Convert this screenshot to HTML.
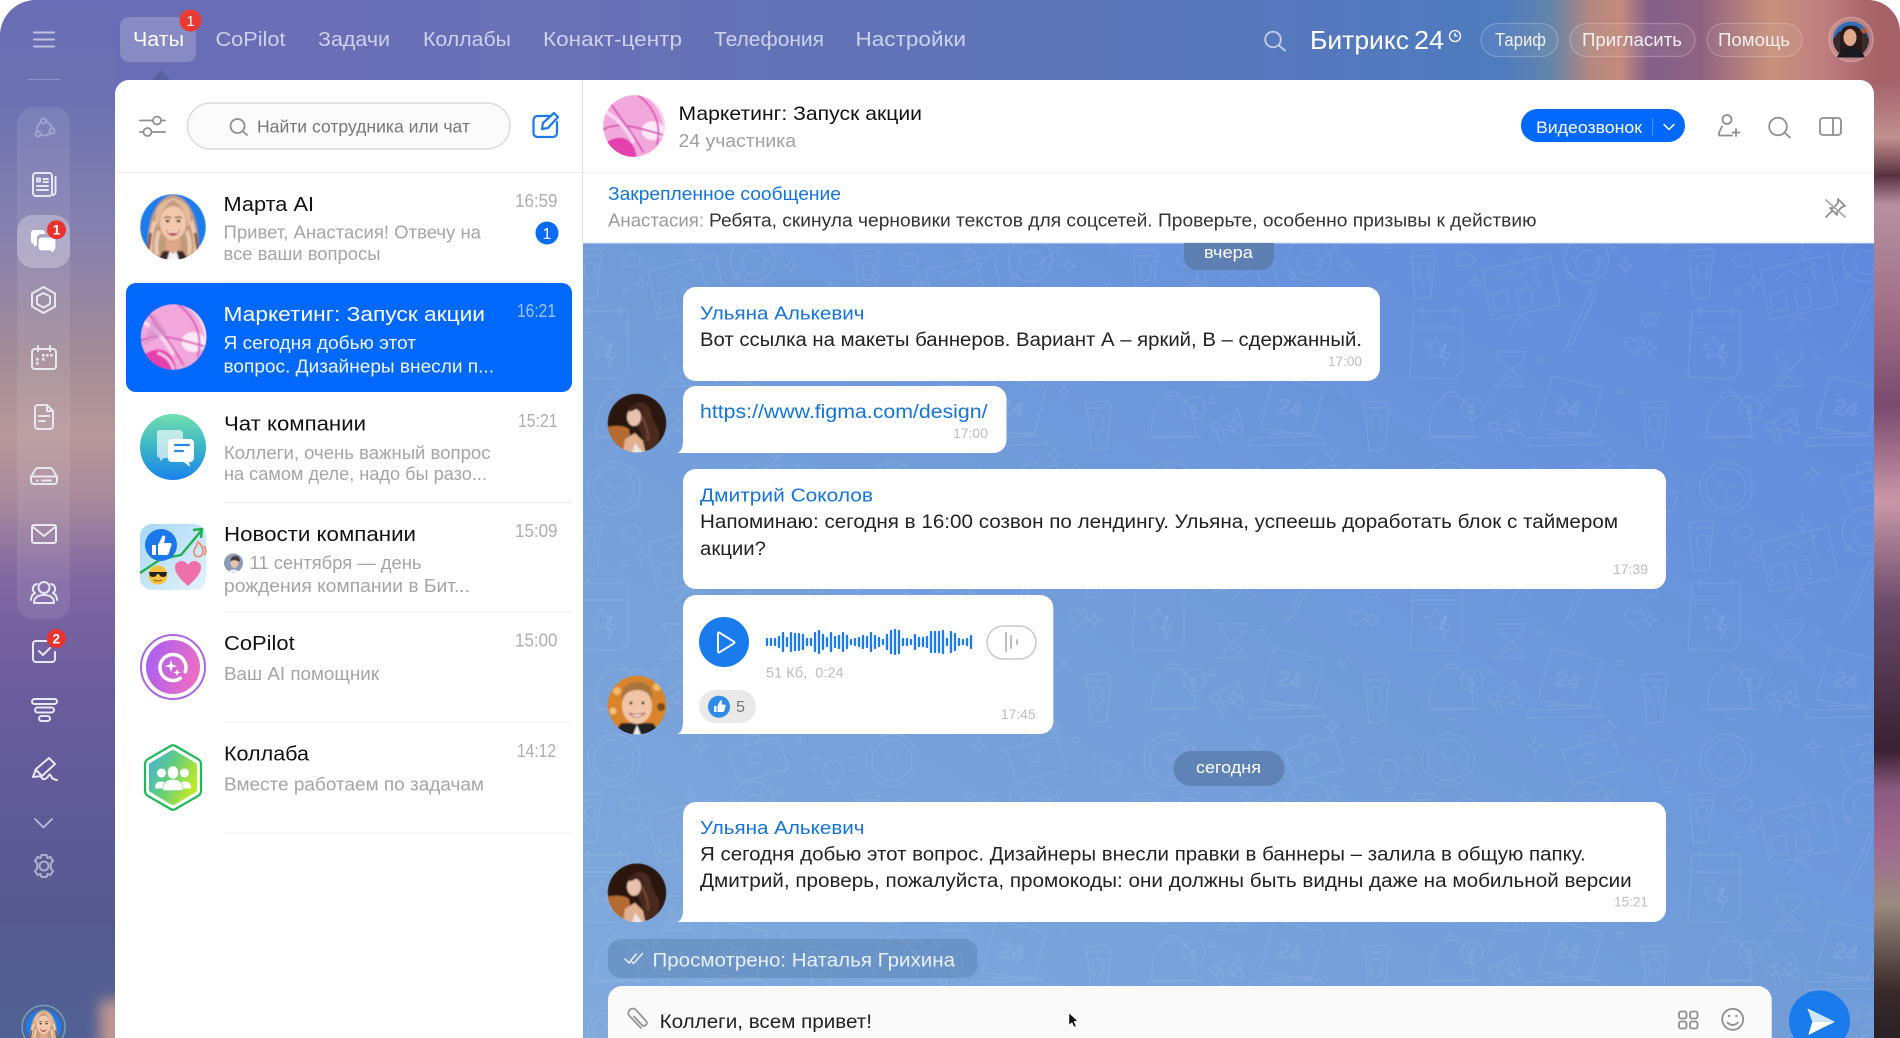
<!DOCTYPE html>
<html lang="ru"><head><meta charset="utf-8"><title>Битрикс24 — Чаты</title>
<style>
html,body{margin:0;padding:0;background:#fff;width:1900px;height:1038px;overflow:hidden}
svg{display:block}
text{font-family:"Liberation Sans","Noto Sans CJK SC",sans-serif;white-space:pre}
.nav{font-size:20px;fill:#cdd2ea}
.hb{font-size:18px;fill:#f4f0f0}
.n{font-size:20px;fill:#111}
.p{font-size:18px;fill:#a5a5a5}
.tm{font-size:18px;fill:#aeaeae}
.s{font-size:18px;fill:#fff}
.nm{font-size:18.5px;fill:#1573d6}
.m{font-size:19px;fill:#222}
.mt{font-size:14px;fill:#bdbdbd}
.ic{fill:none;stroke:#e6e8f2;stroke-width:2;stroke-linecap:round;stroke-linejoin:round}
.gi{fill:none;stroke:#8f8f8f;stroke-width:1.8;stroke-linecap:round;stroke-linejoin:round}
.d{fill:none;stroke:#fff;stroke-opacity:.085;stroke-width:1.2;stroke-linecap:round;stroke-linejoin:round}
</style></head><body>
<svg width="1900" height="1038" viewBox="0 0 1900 1038" xmlns="http://www.w3.org/2000/svg">
<defs>
<linearGradient id="lc" x1="0" y1="0" x2="0" y2="1">
<stop offset="0" stop-color="#6a6cb5"/><stop offset=".1" stop-color="#6c72b1"/><stop offset=".24" stop-color="#8a82ad"/><stop offset=".34" stop-color="#a28b96"/><stop offset=".42" stop-color="#b7989b"/><stop offset=".48" stop-color="#a88a9b"/><stop offset=".56" stop-color="#7f66a2"/><stop offset=".67" stop-color="#6a5c9d"/><stop offset=".78" stop-color="#5f5a98"/><stop offset=".88" stop-color="#565a90"/><stop offset="1" stop-color="#526193"/>
</linearGradient>
<linearGradient id="tb" gradientUnits="userSpaceOnUse" x1="0" y1="0" x2="1900" y2="0">
<stop offset="0" stop-color="#6a6cb5"/><stop offset=".3" stop-color="#6870b6"/><stop offset=".55" stop-color="#5d74b8"/><stop offset=".79" stop-color="#4f7bbf"/><stop offset=".816" stop-color="#6285aa"/><stop offset=".837" stop-color="#b5877f"/><stop offset=".853" stop-color="#c48a7c"/><stop offset=".868" stop-color="#84608a"/><stop offset=".895" stop-color="#8f6280"/><stop offset=".932" stop-color="#c8917a"/><stop offset=".958" stop-color="#bf8080"/><stop offset=".985" stop-color="#a86468"/><stop offset="1" stop-color="#a56068"/>
</linearGradient>
<linearGradient id="rs" x1="0" y1="0" x2="0" y2="1">
<stop offset="0" stop-color="#a5606a"/><stop offset=".06" stop-color="#c0918f"/><stop offset=".1" stop-color="#5a3040"/><stop offset=".13" stop-color="#b890a0"/><stop offset=".24" stop-color="#a07088"/><stop offset=".34" stop-color="#7a4a70"/><stop offset=".44" stop-color="#c898a8"/><stop offset=".55" stop-color="#6a4a6a"/><stop offset=".7" stop-color="#3a2030"/><stop offset=".74" stop-color="#8a5a80"/><stop offset=".8" stop-color="#a06a90"/><stop offset=".86" stop-color="#9a8a80"/><stop offset=".95" stop-color="#3a2a2a"/><stop offset="1" stop-color="#2a2025"/>
</linearGradient>
<linearGradient id="cb" x1="0" y1="1" x2="1" y2="0">
<stop offset="0" stop-color="#80aadc"/><stop offset=".5" stop-color="#719cd9"/><stop offset="1" stop-color="#5f88dd"/>
</linearGradient>
<linearGradient id="g1" x1="0" y1="0" x2="0" y2="1"><stop offset="0" stop-color="#72deae"/><stop offset=".5" stop-color="#3cb6c8"/><stop offset="1" stop-color="#1a82ee"/></linearGradient>
<linearGradient id="g2" x1="0" y1="0" x2="1" y2="1"><stop offset="0" stop-color="#a5d8f6"/><stop offset="1" stop-color="#e4f2fc"/></linearGradient>
<linearGradient id="g3" x1="0" y1="0" x2="1" y2=".3"><stop offset="0" stop-color="#a25ff6"/><stop offset="1" stop-color="#ea6cc6"/></linearGradient>
<linearGradient id="g4" x1="0" y1="0" x2="1" y2=".5"><stop offset="0" stop-color="#3db2dc"/><stop offset=".5" stop-color="#62cc82"/><stop offset="1" stop-color="#bce828"/></linearGradient>
<clipPath id="c33"><circle r="33"/></clipPath>
<clipPath id="c29"><circle r="29.5"/></clipPath>
<filter id="b4" x="-80%" y="-50%" width="260%" height="200%"><feGaussianBlur stdDeviation="7"/></filter>
<filter id="sf" x="-10%" y="-10%" width="120%" height="120%"><feGaussianBlur stdDeviation=".7"/></filter>

<g id="t" class="d">
 <circle cx="28" cy="30" r="26"/><circle cx="28" cy="30" r="20"/><path d="M20 22l8 9 9-4M28 44v1"/>
 <path d="M142 20l50-13 11 32-50 13zM160 15l-2-7 14-4 2 7M162 26l12-3 2 8-12 3z"/>
 <path d="M247 30a10 10 0 0 1 7 17l-1 6h-12l-1-6a10 10 0 0 1 7-17zM242 58h10M244 62h6M228 28h4M228 40h3M264 28h4M264 40h3"/>
 <path d="M270 70h24l-2 7-3 34-16 2-3-36zM268 70l3-6 20-1 4 6M276 86a6 9 0 1 0 12-1 6 9 0 1 0-12 1z"/>
 <path d="M62 84l68-15 10 50-68 15zM100 130l-10 14M102 130l12 10M72 108l15-3 3 18-15 3zM96 104l14-3 4 19-14 3zM120 99l-6-15M78 94l14-10 8 6 16-12M112 76l5 2-2 5"/>
 <path d="M182 58a22 22 0 1 0 .1 .1zM176 68a12 12 0 1 0 .1 .1zM174 79l20-16M190 60l8 2-3 6"/>
 <path d="M172 103l-22 50-4 8 7-4 24-51zM146 161l-4 5"/>
 <path d="M272 125l48 0 0 60-8 8-44-2zM280 120v10M312 120v10M268 142h52M294 150l3 8 8 1-6 5 2 8-7-4-7 4 2-8-6-5 8-1z"/>
 <path d="M76 166l30 0M78 166c0 12 10 14 12 18-2 4-12 8-12 16M104 166c0 12-10 14-12 18 2 4 12 8 12 16M74 200l32 0M82 196l8-6 8 6"/>
 <path d="M10 250c-2-12 2-38 20-40s22 20 24 40zM3 252l56-1M23 210c2-6 14-6 16 0M28 262l8-1"/><circle cx="52" cy="222" r="11"/>
 <path d="M132 190l50 12-12 48-52-8zM108 252l70-2 6 8-76 2zM128 248l42-1"/>
 <text x="135" y="230" font-size="22" class="d" transform="rotate(12 150 225)">24</text>
 <text x="49" y="227" font-size="11" class="d">1</text>
 <path d="M222 222h26l-2 7-3 34-16 2-3-36zM220 222l3-6 20-1 4 6M228 238a6 9 0 1 0 12-1 6 9 0 1 0-12 1z"/>
 <path d="M76 236l20-14 5 26-22-5zM76 236l-8 2 3 7 8-2M74 244l4 12 5-2-3-11"/>
 <path d="M115 8l2 6 6 2-6 2-2 6-2-6-6-2 6-2zM105 60l2 5 5 2-5 2-2 5-2-5-5-2 5-2zM205 73l2 5 5 2-5 2-2 5-2-5-5-2 5-2zM55 90l2 5 5 2-5 2-2 5-2-5-5-2 5-2zM230 155l2 5 5 2-5 2-2 5-2-5-5-2 5-2zM92 232l2 5 5 2-5 2-2 5-2-5-5-2 5-2zM190 262l2 5 5 2-5 2-2 5-2-5-5-2 5-2z"/>
 <circle cx="212" cy="10" r="3"/><circle cx="40" cy="105" r="3"/><circle cx="150" cy="90" r="3"/><circle cx="245" cy="100" r="3"/><circle cx="70" cy="215" r="3"/><circle cx="200" cy="205" r="3"/><circle cx="120" cy="175" r="3"/>
 <path d="M40 70c6-4 14-2 14 4s-8 8-14 6-6-8 0-10zM225 130c4-5 12-3 12 3 0 4-6 8-12 6-4-2-4-6 0-9zM205 155c3-4 8-4 10 0 2-4 8-4 9 1 0 5-6 8-10 12-4-4-10-8-9-13zM20 170l6-14-2 10 6 1-7 14 2-10z"/>
</g>
<pattern id="dood" patternUnits="userSpaceOnUse" x="1420" y="730" width="278" height="272">
 <use href="#t"/><use href="#t" x="-278"/><use href="#t" y="-272"/><use href="#t" x="-278" y="-272"/>
</pattern>

<g id="marta" clip-path="url(#c33)">
 <g filter="url(#sf)">
 <circle r="33" fill="#1b7bea"/>
 <path d="M-25 33C-27 18-26-28 0-32 26-28 27 18 25 33Z" fill="#c49a7c"/>
 <path d="M-21 32c-4-12 0-30 3-38M21 32c4-12 0-30-3-38M-16 28c-2-10 0-18 2-24M16 28c2-10 0-18-2-24" stroke="#ecc9b0" stroke-width="4" fill="none"/>
 <path d="M-26 26c3-8 2-14 4-20M26 26c-3-8-2-14-4-20" stroke="#8a5a40" stroke-width="3" fill="none"/>
 <path d="M-15 33l5-9 20 0 5 9Z" fill="#3a2c28"/><path d="M-6 33l3-10h6l3 10Z" fill="#f4f4f4"/>
 <path d="M-6 8h12l2 13-8 6-8-6Z" fill="#dfa78a"/>
 <ellipse cy="-4" rx="13" ry="17" fill="#f2c9ac"/>
 <path d="M0-27C-8-22-13-14-15 0-20-10-19-25 0-29 19-25 20-10 15 0 13-14 8-22 0-27Z" fill="#e2bb9c"/>
 <path d="M-9-9q3.500-2 7 0M2-9q3.500-2 7 0" stroke="#6a4430" stroke-width="1.200" fill="none"/>
 <ellipse cx="-5.500" cy="-6" rx="2" ry="1.300" fill="#3a2418"/><ellipse cx="5.500" cy="-6" rx="2" ry="1.300" fill="#3a2418"/>
 <path d="M-7 3q7 3 14 0-2 6-7 6t-7-6Z" fill="#c04a50"/><path d="M-5.500 3.800q5.500 2 11 0l-1 2h-9Z" fill="#fff"/>
 </g>
</g>
<g id="girl" clip-path="url(#c29)">
 <g filter="url(#sf)">
 <circle r="29.500" fill="#2a1510"/>
 <path d="M-30 4q14-3 22 2l4 26h-26Z" fill="#b56a30"/>
 <path d="M-14 30l2-14 10-6 8 8 3 14Z" fill="#e0b090"/>
 <path d="M-8-14c6-10 20-8 22 4 1 8 6 12 8 18 2 10-4 18-10 20-6-4-6-12-8-18-4-8-10-14-12-24Z" fill="#4a2a1f"/>
 <path d="M4-8c3 8 8 14 7 26" stroke="#6e4530" stroke-width="2.500" fill="none"/>
 <ellipse cx="-3" cy="-6" rx="7" ry="9" fill="#e9c2ae"/>
 <path d="M-10-12c2-7 12-9 16-3 0 5 1 8 1 11-2-5-5-9-8-10-3 2-6 3-9 2Z" fill="#40241a"/>
 <path d="M-5 30l3-10 8 10Z" fill="#f0e4e4"/>
 </g>
</g>
<g id="dima" clip-path="url(#c29)">
 <g filter="url(#sf)">
 <circle r="29.500" fill="#d9842c"/>
 <circle cx="-20" cy="-14" r="4" fill="#f0b96a"/><circle cx="20" cy="-18" r="4" fill="#f0b96a"/><circle cx="-24" cy="6" r="3.500" fill="#f3c27a"/><circle cx="24" cy="2" r="4" fill="#7a4a1f"/>
 <path d="M-24 30l8-12 32 0 8 12Z" fill="#232024"/><path d="M-4 30l4-10 4 10Z" fill="#eee"/>
 <ellipse cy="1" rx="15" ry="18" fill="#f1c4a6"/>
 <path d="M-15-4c-2-14 6-19 17-19 10 0 15 8 13 19-2-8-8-11-15-11-6 0-13 3-15 11Z" fill="#a9743c"/>
 <path d="M-8 8q8 8 16 0-8 3-16 0Z" fill="#fff" stroke="#b05a50" stroke-width="1"/>
 <circle cx="-6" cy="-2" r="1.500" fill="#333"/><circle cx="6" cy="-2" r="1.500" fill="#333"/>
 </g>
</g>
</defs>

<!-- frame background -->
<rect width="1900" height="1038" fill="#fff"/>
<path d="M36 0H1868a32 32 0 0 1 32 32V1038H0V36A36 36 0 0 1 36 0Z" fill="url(#tb)"/>
<path d="M0 36A36 36 0 0 1 36 0H115V1038H0Z" fill="url(#lc)"/>
<rect x="1874" y="80" width="26" height="958" fill="url(#rs)"/>
<rect x="100" y="1000" width="30" height="60" fill="#dca592" opacity=".8" filter="url(#b4)"/>

<!-- sidebar -->
<path d="M34 32.500h20M34 39.500h20M34 46.500h20" stroke="#d4d8ec" stroke-opacity=".8" stroke-width="2" stroke-linecap="round"/>
<path d="M28 79.500h32" stroke="#fff" stroke-opacity=".22"/>
<rect x="17" y="107" width="53" height="512" rx="16" fill="#fff" fill-opacity=".09"/>
<rect x="17" y="215" width="53" height="53" rx="16" fill="#fff" fill-opacity=".28"/>
<g class="ic" opacity=".35" stroke-width="1.800"><circle cx="43.500" cy="121" r="2.600"/><circle cx="38" cy="134" r="2.600"/><circle cx="52" cy="131" r="2.600"/><path d="M37 130a9 9 0 0 1 3-7M47 122a9 9 0 0 1 5 6M41 135a9 9 0 0 0 8-1" stroke-dasharray="3 2"/></g>
<g class="ic"><rect x="33" y="173" width="19" height="23" rx="3"/><path d="M55.500 177v15a3 3 0 0 1-3 3M37 178.500h3v3h-3zM43.500 179h4.500M43.500 182h4.500M37 186h11M37 190h11"/></g>
<path d="M34 230h8a3 3 0 0 1 3 3v1h-4a4 4 0 0 0-4 4v7l-3 2v-3a3 3 0 0 1-3-3v-8a3 3 0 0 1 3-3z" fill="#fff"/>
<path d="M41 237h12a3 3 0 0 1 3 3v8a3 3 0 0 1-2 2.800v3.200l-4-3H41a3 3 0 0 1-3-3v-8a3 3 0 0 1 3-3z" fill="#fff" stroke="#a09cbd"/>
<path class="ic" d="M43.500 287l11.500 6.500v13l-11.500 6.500-11.500-6.500v-13zM43.500 293l6.500 3.500v7.500l-6.500 3.500-6.500-3.500v-7.500z"/>
<g class="ic"><rect x="32" y="349" width="24" height="20" rx="3"/><path d="M38 346v5M50 346v5"/></g>
<g fill="#e6e8f2"><rect x="42" y="354" width="2.600" height="2.600"/><rect x="46" y="354" width="2.600" height="2.600"/><rect x="50" y="354" width="2.600" height="2.600"/><rect x="36" y="358" width="2.600" height="2.600"/><rect x="42" y="358" width="2.600" height="2.600"/><rect x="36" y="362" width="2.600" height="2.600"/></g>
<path class="ic" d="M35 408a3 3 0 0 1 3-3h9l6 6v15a3 3 0 0 1-3 3H38a3 3 0 0 1-3-3zM47 405v6h6M39 416h10M39 421h6"/>
<path class="ic" d="M31 477l4-7q1-2 4-2h10q3 0 4 2l4 7v4a3 3 0 0 1-3 3H34a3 3 0 0 1-3-3zM31 476.500h26M37 480.500h.5M42 480.500h9"/>
<path class="ic" d="M34 525h20a2 2 0 0 1 2 2v14a2 2 0 0 1-2 2H34a2 2 0 0 1-2-2v-14a2 2 0 0 1 2-2zM33 527l11 9 11-9"/>
<path class="ic" d="M44 582a5.500 5.500 0 1 1 0 11 5.500 5.500 0 0 1 0-11zM34 603q0-8 10-8t10 8zM37 584a5 5 0 0 0-2 9q-4 2-4 7M51 584a5 5 0 0 1 2 9q4 2 4 7"/>
<path class="ic" d="M36 641h13M55 652v7a3 3 0 0 1-3 3H36a3 3 0 0 1-3-3v-15a3 3 0 0 1 3-3M39 651l4 4 7-7"/>
<g class="ic"><rect x="32" y="699" width="25" height="5" rx="2.500"/><rect x="35" y="707.500" width="19" height="5" rx="2.500"/><rect x="39" y="716" width="11" height="5" rx="2.500"/></g>
<path class="ic" d="M33 777l3-8 13-11 6 6-13 12zM36 770l6 6M41 777c3 5 7 0 8-2s3 3 3 3 3 2 5 2"/>
<path d="M35 819l8.500 8.500 8.500-8.500" fill="none" stroke="#d7d9ea" stroke-opacity=".8" stroke-width="1.700" stroke-linecap="round" stroke-linejoin="round"/>
<g class="ic" opacity=".6" stroke-width="1.700"><circle cx="44" cy="866" r="4.500"/><path d="M41.500 855h5l1 3 3-1 2.500 4-2.200 2.200v5.600l2.200 2.200-2.500 4-3-1-1 3h-5l-1-3-3 1-2.500-4 2.200-2.200v-5.600l-2.200-2.200 2.500-4 3 1z"/></g>
<circle cx="56.500" cy="229.700" r="9.500" fill="#e8332f"/><text x="56.500" y="234.600" font-size="13.500" fill="#fff" text-anchor="middle" font-weight="bold">1</text>
<circle cx="56.300" cy="638.500" r="9.500" fill="#e8332f"/><text x="56.300" y="643.400" font-size="13.500" fill="#fff" text-anchor="middle" font-weight="bold">2</text>
<circle cx="43.600" cy="1027" r="21.500" fill="none" stroke="#6fb6c4" stroke-width="1.500" opacity=".8"/>
<g transform="translate(43.600 1027) scale(.54)"><use href="#marta"/></g>

<!-- top nav -->
<rect x="120" y="17" width="76" height="45" rx="9" fill="#fff" fill-opacity=".2"/>
<path d="M161 70l-9 10h18z" fill="#535d9c" fill-opacity=".7"/>
<text class="nav" x="133" y="46" style="fill:#fff" textLength="51" lengthAdjust="spacingAndGlyphs">Чаты</text>
<text class="nav" x="215.500" y="46" textLength="70" lengthAdjust="spacingAndGlyphs">CoPilot</text>
<text class="nav" x="318" y="46" textLength="72" lengthAdjust="spacingAndGlyphs">Задачи</text>
<text class="nav" x="423" y="46" textLength="88" lengthAdjust="spacingAndGlyphs">Коллабы</text>
<text class="nav" x="543" y="46" textLength="139" lengthAdjust="spacingAndGlyphs">Конакт-центр</text>
<text class="nav" x="714" y="46" textLength="110" lengthAdjust="spacingAndGlyphs">Телефония</text>
<text class="nav" x="855.500" y="46" textLength="110.500" lengthAdjust="spacingAndGlyphs">Настройки</text>
<circle cx="190.500" cy="20.500" r="11" fill="#ea3a33"/><text x="190.500" y="26" font-size="15" fill="#fff" text-anchor="middle">1</text>
<g fill="none" stroke="#c5cde6" stroke-width="1.900" stroke-linecap="round"><circle cx="1273" cy="39.500" r="7.800"/><path d="M1279 45.500l6 5"/></g>
<text x="1310" y="49" font-size="26" fill="#fff" textLength="99" lengthAdjust="spacingAndGlyphs">Битрикс</text>
<text x="1414" y="49" font-size="26" fill="#fff" textLength="30" lengthAdjust="spacingAndGlyphs">24</text>
<g fill="none" stroke="#fff" stroke-width="1.300"><circle cx="1455" cy="36" r="5.500"/><path d="M1455 33v3h2.500"/></g>
<g fill="#fff" fill-opacity=".05" stroke="#fff" stroke-opacity=".22" stroke-width="1.300">
<rect x="1481" y="23.500" width="77" height="33" rx="16.500"/><rect x="1570" y="23.500" width="125" height="33" rx="16.500"/><rect x="1707" y="23.500" width="95" height="33" rx="16.500"/></g>
<text class="hb" x="1495" y="46" textLength="51" lengthAdjust="spacingAndGlyphs">Тариф</text>
<text class="hb" x="1582" y="46" textLength="100" lengthAdjust="spacingAndGlyphs">Пригласить</text>
<text class="hb" x="1718" y="46" textLength="72" lengthAdjust="spacingAndGlyphs">Помощь</text>
<circle cx="1851" cy="39.500" r="22" fill="#fff" fill-opacity=".15" stroke="#e8b8b0" stroke-opacity=".5" stroke-width="1.500"/>
<g transform="translate(1851 39.500)"><circle r="18" fill="#2f6fb8"/><path d="M-18 0a18 18 0 0 0 36 0l-4-8h-26z" fill="#3a2a2c"/><path d="M-11 18V-2q0-12 11-12t11 12v20z" fill="#2a1b1a"/><ellipse cy="-2" cx="-1" rx="6.500" ry="8.500" fill="#e0a98c"/><path d="M-14 18q4-10 14-10t14 10z" fill="#181a20"/><circle cx="13" cy="-9" r="3" fill="#b05a3a"/></g>

<!-- main white panel -->
<path d="M129 80H1860a14 14 0 0 1 14 14V1038H115V94a14 14 0 0 1 14-14Z" fill="#fff"/>
<rect x="582" y="80" width="1" height="163" fill="#d9e4f3"/>
<rect x="115" y="172" width="467" height="1" fill="#efefef"/>
<rect x="583" y="172" width="1291" height="1" fill="#f2f2f2"/>

<!-- list header -->
<g class="gi" stroke-width="1.600"><path d="M140 120.500h25M140 132h25"/><circle cx="157" cy="120.500" r="4" fill="#fff"/><circle cx="147.500" cy="132" r="4" fill="#fff"/></g>
<rect x="187.500" y="103" width="322.500" height="46" rx="23" fill="#fbfbfb" stroke="#dcdcdc" stroke-width="1.500"/>
<g class="gi" stroke-width="1.500"><circle cx="237.500" cy="126" r="7"/><path d="M243 131.500l4 3.500"/></g>
<text x="257" y="132.500" font-size="17.500" fill="#787878" textLength="213" lengthAdjust="spacingAndGlyphs">Найти сотрудника или чат</text>
<path d="M549 116h-11.500a4 4 0 0 0-4 4v13a4 4 0 0 0 4 4H553a4 4 0 0 0 4-4v-11M542 129l1-6 11-10 4 4-10 11z" fill="none" stroke="#1a7be8" stroke-width="2.200" stroke-linecap="round" stroke-linejoin="round"/>

<!-- list items -->
<g transform="translate(173 227)"><use href="#marta"/></g>
<text class="n" x="223.500" y="211" textLength="90.500" lengthAdjust="spacingAndGlyphs">Марта AI</text>
<text class="tm" x="515" y="207" textLength="42.500" lengthAdjust="spacingAndGlyphs">16:59</text>
<text class="p" x="223.500" y="238.700" textLength="257.500" lengthAdjust="spacingAndGlyphs">Привет, Анастасия! Отвечу на</text>
<text class="p" x="223.500" y="260" textLength="157" lengthAdjust="spacingAndGlyphs">все ваши вопросы</text>
<circle cx="547" cy="233" r="11.500" fill="#0a6cf5"/><text x="547" y="239" font-size="16" fill="#fff" text-anchor="middle">1</text>
<rect x="223" y="281.500" width="349" height="1" fill="#f0f0f0"/>

<rect x="126" y="283" width="446" height="109" rx="10" fill="#0069fb"/>
<g transform="translate(173.500 337)" clip-path="url(#c33)">
 <g filter="url(#sf)">
 <circle r="33" fill="#f2a8dc"/>
 <path d="M-33 20C-14 5 0 14 3 33H-33Z" fill="#e43fae"/><path d="M-16 16C-8 18-2 24 0 33" stroke="#f5c2e6" stroke-width="3" fill="none"/>
 <ellipse cx="20" cy="5" rx="12" ry="10" fill="#fde8f6"/><path d="M4-33C22-20 30 0 24 20M-25-24C-14-8-4 4 10 28M-33 4C-16-6 4 2 33 10" fill="none" stroke="#d95bb8" stroke-width="2"/>
 <path d="M-30-15C-18-8-8 2 0 18M14-33C28-22 36-6 32 14" fill="none" stroke="#fbd6f0" stroke-width="4"/>
 <path d="M-30 8L-6-4-20-24Z" fill="#d28ec8" opacity=".6"/>
 </g>
</g>
<text class="n" style="fill:#fff" x="223.500" y="321" textLength="261.500" lengthAdjust="spacingAndGlyphs">Маркетинг: Запуск акции</text>
<text class="tm" style="fill:#9cc4fc" x="517" y="317" textLength="39" lengthAdjust="spacingAndGlyphs">16:21</text>
<text class="p" style="fill:#f0f6ff" x="223.500" y="349" textLength="192.500" lengthAdjust="spacingAndGlyphs">Я сегодня добью этот</text>
<text class="p" style="fill:#f0f6ff" x="223.500" y="372.700" textLength="270.500" lengthAdjust="spacingAndGlyphs">вопрос. Дизайнеры внесли п...</text>

<g transform="translate(173 447)">
 <circle r="33" fill="url(#g1)"/>
 <path d="M-13-17h19a4 4 0 0 1 4 4v20a4 4 0 0 1-4 4H-9l-4 3v-3a3 3 0 0 1-3-3v-22a3 3 0 0 1 3-3z" fill="#e8f6f6" fill-opacity=".75"/>
 <path d="M-2-8h19a4 4 0 0 1 4 4v15a4 4 0 0 1-4 4h-1l1 5-6-5H-2a4 4 0 0 1-3-4V-4a4 4 0 0 1 3-4z" fill="#fff"/>
 <path d="M2-2h14M2 4h8" stroke="#2a8aea" stroke-width="2.200" stroke-linecap="round"/>
</g>
<text class="n" x="224" y="430.500" textLength="142" lengthAdjust="spacingAndGlyphs">Чат компании</text>
<text class="tm" x="518" y="427" textLength="39.500" lengthAdjust="spacingAndGlyphs">15:21</text>
<text class="p" x="224" y="459" textLength="266.500" lengthAdjust="spacingAndGlyphs">Коллеги, очень важный вопрос</text>
<text class="p" x="224" y="480" textLength="263" lengthAdjust="spacingAndGlyphs">на самом деле, надо бы разо...</text>
<rect x="224" y="502" width="348" height="1" fill="#eee"/>

<g transform="translate(173 557)">
 <rect x="-33" y="-33" width="66" height="66" rx="12" fill="url(#g2)"/>
 <path d="M-33 16L-12 2 8-2 28-26M20-27l9-1-1 9" fill="none" stroke="#1fb04c" stroke-width="2.400" stroke-linejoin="round"/>
 <circle cx="-12" cy="-12" r="16" fill="#1a78ea"/>
 <path d="M-21-12h4v10h-4zM-15-12l4-8c1-3 4-1 3 2l-1 4h6c2 0 2 2 1 3l-2 7c-1 2-2 2-3 2h-8z" fill="#fff"/>
 <circle cx="-15" cy="18" r="9.500" fill="#f6c03c"/><path d="M-24 15h18l-1 4q-3 2-6 0l-1-2h-2l-1 2q-3 2-6 0z" fill="#222"/><path d="M-19 23q4 2 8 0" stroke="#8a5a1a" fill="none"/>
 <path d="M15 29C6 21 2 16 2 10c0-6 9-9 13-2 4-7 13-4 13 2 0 6-4 11-13 19z" fill="#ef70a8"/>
 <path d="M25-15c5 4 6 9 4 13-3 3-7 2-8-2-1-4 3-6 4-11zM31-11c2 3 3 6 0 9" fill="none" stroke="#e8907a" stroke-width="1.800"/>
</g>
<text class="n" x="224" y="541" textLength="192" lengthAdjust="spacingAndGlyphs">Новости компании</text>
<text class="tm" x="515" y="537" textLength="42.500" lengthAdjust="spacingAndGlyphs">15:09</text>
<g transform="translate(233.500 563)"><circle r="9.500" fill="#8a9bb8"/><ellipse cx="1" cy="0" rx="4" ry="5" fill="#e6c3ac"/><path d="M-3-2q0-5 5-5t4 6q-4-3-9 -1z" fill="#4a3a3a"/><path d="M-6 9q6-5 12 0" fill="#f0f0f4"/></g>
<text class="p" x="249.500" y="569" textLength="172" lengthAdjust="spacingAndGlyphs">11 сентября — день</text>
<text class="p" x="224" y="592" textLength="246" lengthAdjust="spacingAndGlyphs">рождения компании в Бит...</text>
<rect x="224" y="611.500" width="348" height="1" fill="#eee"/>

<g transform="translate(173 667)">
 <circle r="32" fill="#fff" stroke="#a868e0" stroke-width="2"/>
 <circle r="27" fill="url(#g3)"/>
 <path d="M12 6a13 13 0 1 1 1-8" fill="none" stroke="#fff" stroke-width="3.500" stroke-linecap="round" transform="rotate(30)"/>
 <path d="M-2-7l1.500 4.500L4-1-.5.500-2 5-3.500.500-8-1l4.500-1.500zM4 2l1 2.500L7.500 5.500 5 6.500 4 9 3 6.500.5 5.500 3 4.500z" fill="#fff"/>
</g>
<text class="n" x="224" y="650" textLength="70.700" lengthAdjust="spacingAndGlyphs">CoPilot</text>
<text class="tm" x="515" y="646.500" textLength="42.500" lengthAdjust="spacingAndGlyphs">15:00</text>
<text class="p" x="224" y="680" textLength="155" lengthAdjust="spacingAndGlyphs">Ваш AI помощник</text>
<rect x="224" y="721.500" width="348" height="1" fill="#eee"/>

<g transform="translate(173 777.500)">
 <path d="M-2.500-31.500q2.500-1.500 5 0L25-18.500q3 2 3 5v27q0 3-3 5L2.500 31.500q-2.500 1.500-5 0L-25 18.500q-3-2-3-5v-27q0-3 3-5z" fill="#fff" stroke="#1fb85a" stroke-width="2.200"/>
 <path d="M-2-27q2-1 4 0L22-15q2 1 2 3v24q0 2-2 3L2 27q-2 1-4 0L-22 15q-2-1-2-3v-24q0-2 2-3z" fill="url(#g4)"/>
 <g fill="#fff"><circle cx="-11.500" cy="-4.500" r="4.500"/><path d="M-18 11c0-5 2-7 6-7s6 2 6 7z"/><circle cx="11.500" cy="-4.500" r="4.500"/><path d="M18 11c0-5-2-7-6-7s-6 2-6 7z"/><ellipse cy="-5" rx="5.500" ry="6.500" stroke="#7fd28a" stroke-width=".6"/><path d="M-10 13c0-8 3-11 10-11s10 3 10 11z" stroke="#7fd28a" stroke-width=".6"/></g>
</g>
<text class="n" x="224" y="760.500" textLength="85" lengthAdjust="spacingAndGlyphs">Коллаба</text>
<text class="tm" x="517" y="757" textLength="39" lengthAdjust="spacingAndGlyphs">14:12</text>
<text class="p" x="224" y="790.500" textLength="260" lengthAdjust="spacingAndGlyphs">Вместе работаем по задачам</text>
<rect x="224" y="832.500" width="348" height="1" fill="#eee"/>

<!-- chat header -->
<g transform="translate(634 126) scale(.94)" clip-path="url(#c33)">
 <g filter="url(#sf)">
 <circle r="33" fill="#f2a8dc"/>
 <path d="M-33 20C-14 5 0 14 3 33H-33Z" fill="#e43fae"/>
 <ellipse cx="20" cy="5" rx="12" ry="10" fill="#fde8f6"/><path d="M4-33C22-20 30 0 24 20M-25-24C-14-8-4 4 10 28M-33 4C-16-6 4 2 33 10" fill="none" stroke="#d95bb8" stroke-width="2"/>
 <path d="M-30-15C-18-8-8 2 0 18M14-33C28-22 36-6 32 14" fill="none" stroke="#fbd6f0" stroke-width="4"/>
 </g>
</g>
<text x="678.500" y="120" font-size="19.500" fill="#111" textLength="243.500" lengthAdjust="spacingAndGlyphs">Маркетинг: Запуск акции</text>
<text x="678.500" y="147" font-size="18" fill="#a0a0a0" textLength="117.500" lengthAdjust="spacingAndGlyphs">24 участника</text>
<rect x="1521" y="109" width="164" height="33" rx="16.500" fill="#0069fb"/>
<text x="1536" y="133" font-size="17" fill="#fff" textLength="106" lengthAdjust="spacingAndGlyphs">Видеозвонок</text>
<path d="M1652.700 118v18" stroke="#fff" stroke-opacity=".3"/>
<path d="M1664 124.500l5 5 5-5" fill="none" stroke="#fff" stroke-width="1.500" stroke-linecap="round" stroke-linejoin="round"/>
<g class="gi" stroke-width="1.500"><circle cx="1727" cy="119.500" r="4.500"/><path d="M1722 126.500l-3 6v3h13M1736 129v7M1732.500 132.500h7"/></g>
<g class="gi" stroke-width="1.900"><circle cx="1778" cy="126.500" r="8.800"/><path d="M1784.500 132.500l5.500 5"/></g>
<g class="gi" stroke-width="1.700"><rect x="1820" y="118" width="21" height="17" rx="3"/><path d="M1833 118v17"/></g>
<text x="608" y="200" font-size="18" fill="#1573d6" textLength="233" lengthAdjust="spacingAndGlyphs">Закрепленное сообщение</text>
<text x="608" y="226.600" font-size="18" fill="#9b9b9b" textLength="96" lengthAdjust="spacingAndGlyphs">Анастасия:</text>
<text x="709" y="226.600" font-size="18" fill="#333" textLength="827.500" lengthAdjust="spacingAndGlyphs">Ребята, скинула черновики текстов для соцсетей. Проверьте, особенно призывы к действию</text>
<g class="gi" stroke-width="1.300"><path d="M1826 217l6-6M1838 199l7 7-3 1-5 5 0 3-7-7 3 0 5-5z"/><path d="M1826 200l19 17" stroke="#aaa"/></g>

<!-- chat area -->
<rect x="583" y="243" width="1291" height="795" fill="url(#cb)"/>
<rect x="583" y="243" width="1291" height="795" fill="url(#dood)"/>
<path d="M583 243h1291" stroke="#cfe0f6"/>

<path d="M1184 243h90v14a13 13 0 0 1-13 13h-64a13 13 0 0 1-13-13z" fill="#5d7fb2"/>
<text x="1204" y="258" font-size="17" fill="#fff" textLength="49" lengthAdjust="spacingAndGlyphs">вчера</text>

<!-- bubble 1 -->
<rect x="683" y="287" width="697" height="94" rx="13" fill="#fff"/>
<text class="nm" x="700" y="319.300" textLength="164.500" lengthAdjust="spacingAndGlyphs">Ульяна Алькевич</text>
<text class="m" x="700" y="346" textLength="662" lengthAdjust="spacingAndGlyphs">Вот ссылка на макеты баннеров. Вариант А – яркий, В – сдержанный.</text>
<text class="mt" x="1328" y="366" textLength="34" lengthAdjust="spacingAndGlyphs">17:00</text>

<!-- bubble 2 -->
<rect x="683" y="386" width="323.500" height="67" rx="13" fill="#fff"/>
<path d="M677 453c4-1 6-5 6-13l12 13z" fill="#fff"/>
<text class="nm" x="700" y="418" textLength="287.500" lengthAdjust="spacingAndGlyphs" style="font-size:19px">https://www.figma.com/design/</text>
<text class="mt" x="953" y="438" textLength="35" lengthAdjust="spacingAndGlyphs">17:00</text>
<g transform="translate(637 423)"><use href="#girl"/></g>

<!-- bubble 3 -->
<rect x="683" y="469" width="983" height="120" rx="13" fill="#fff"/>
<text class="nm" x="700" y="501.700" textLength="173" lengthAdjust="spacingAndGlyphs">Дмитрий Соколов</text>
<text class="m" x="700" y="528" textLength="918" lengthAdjust="spacingAndGlyphs">Напоминаю: сегодня в 16:00 созвон по лендингу. Ульяна, успеешь доработать блок с таймером</text>
<text class="m" x="700" y="555" textLength="66" lengthAdjust="spacingAndGlyphs">акции?</text>
<text class="mt" x="1613" y="574" textLength="35" lengthAdjust="spacingAndGlyphs">17:39</text>

<!-- bubble 4 voice -->
<rect x="683" y="595" width="370.400" height="139" rx="13" fill="#fff"/>
<path d="M677 734c4-1 6-5 6-13l12 13z" fill="#fff"/>
<circle cx="724" cy="642" r="25" fill="#1a7bec"/>
<path d="M718 633.500v18a1 1 0 0 0 1.500 .8l14.500-9a1 1 0 0 0 0-1.600l-14.500-9a1 1 0 0 0-1.500 .8z" fill="none" stroke="#fff" stroke-width="2" stroke-linejoin="round"/>
<path fill="none" stroke="#1a7bec" stroke-width="2.300" stroke-linecap="round" d="M767 639V645M771 639V645M775 639V645M779 637V647M783 633V651M787 638V646M791 633V651M795 634V650M799 634V650M803 635V649M807 639V645M811 639V645M815 633V651M819 631V653M823 635V649M827 638V646M831 633V651M835 637V647M839 636V648M843 633V651M847 636V648M851 640V644M855 639V645M859 638V646M863 636V648M867 637V647M871 633V651M875 636V648M879 638V646M883 640V644M887 635V649M891 631V653M895 630V654M899 631V653M903 639V645M907 639V645M911 640V644M915 635V649M919 638V646M923 638V646M927 637V647M931 632V652M935 632V652M939 632V652M943 631V653M947 639V645M951 632V652M955 634V650M959 639V645M963 640V644M967 639V645M971 636V648"/>
<rect x="987" y="626" width="49" height="33" rx="16.500" fill="#fff" stroke="#c9c9c9" stroke-width="1.500"/>
<path d="M1006 633v18M1011 636v12M1017 640v4" stroke="#bdbdbd" stroke-width="2" stroke-linecap="round"/>
<text x="766" y="677.700" font-size="15" fill="#bcbcbc" textLength="77.600" lengthAdjust="spacingAndGlyphs">51 Кб,  0:24</text>
<rect x="699" y="690" width="57" height="33" rx="16.500" fill="#e9e9e9"/>
<circle cx="719" cy="706.700" r="11" fill="#2f8aea"/>
<path d="M714 706h2.500v6H714zM717.500 706l2.500-5c1-1.500 2.500-.5 2 1l-.5 2.500h3c1 0 1.500 1 1 2l-1 4q-.5 1.500-2 1.500h-5z" fill="#fff"/>
<text x="736" y="712" font-size="16" fill="#777" textLength="9" lengthAdjust="spacingAndGlyphs">5</text>
<text class="mt" x="1001" y="719" textLength="34.500" lengthAdjust="spacingAndGlyphs">17:45</text>
<g transform="translate(637 705)"><use href="#dima"/></g>

<!-- today -->
<rect x="1173.500" y="751" width="111" height="35" rx="17.500" fill="#5f83b5"/>
<text x="1196" y="773" font-size="17" fill="#fff" textLength="65" lengthAdjust="spacingAndGlyphs">сегодня</text>

<!-- bubble 5 -->
<rect x="683" y="802" width="983" height="120" rx="13" fill="#fff"/>
<path d="M677 922c4-1 6-5 6-13l12 13z" fill="#fff"/>
<text class="nm" x="700" y="834" textLength="164.500" lengthAdjust="spacingAndGlyphs">Ульяна Алькевич</text>
<text class="m" x="700" y="860.700" textLength="885.700" lengthAdjust="spacingAndGlyphs">Я сегодня добью этот вопрос. Дизайнеры внесли правки в баннеры – залила в общую папку.</text>
<text class="m" x="700" y="887" textLength="931.700" lengthAdjust="spacingAndGlyphs">Дмитрий, проверь, пожалуйста, промокоды: они должны быть видны даже на мобильной версии</text>
<text class="mt" x="1614" y="906.700" textLength="34" lengthAdjust="spacingAndGlyphs">15:21</text>
<g transform="translate(637 892.700)"><use href="#girl"/></g>

<!-- seen -->
<rect x="608" y="939" width="369.500" height="39" rx="13" fill="#4f75a6" fill-opacity=".38"/>
<path d="M625 959l4 4 7-9M632 962l1.500 1.500 9-10" fill="none" stroke="#e8f0fa" stroke-width="1.500" stroke-linecap="round" stroke-linejoin="round"/>
<text x="652.500" y="966.700" font-size="19" fill="#e8f0fa" textLength="302.500" lengthAdjust="spacingAndGlyphs">Просмотрено: Наталья Грихина</text>

<!-- input -->
<path d="M622 986H1757.700a14 14 0 0 1 14 14V1038H608V1000a14 14 0 0 1 14-14Z" fill="#fafafa"/>
<path d="M641 1028l-12-12.500a4.500 4.500 0 0 1 6.500-6l11 12a3 3 0 0 1-4 4l-8.500-9" fill="none" stroke="#999" stroke-width="1.900" stroke-linecap="round" stroke-linejoin="round"/>
<text x="659.600" y="1028" font-size="19" fill="#222" textLength="212.400" lengthAdjust="spacingAndGlyphs">Коллеги, всем привет!</text>
<path d="M1069 1013v12l3-2.500 2 4.500 2-1-2-4.500 3.500-.5z" fill="#111" stroke="#fff" stroke-width=".5"/>
<g class="gi" stroke-width="1.700"><rect x="1679" y="1011.500" width="7.500" height="7" rx="2"/><rect x="1690" y="1011.500" width="7.500" height="7" rx="2"/><rect x="1679" y="1021.500" width="7.500" height="7" rx="2"/><rect x="1690" y="1021.500" width="7.500" height="7" rx="2"/><circle cx="1732.700" cy="1019.300" r="10.500"/><path d="M1727.500 1022.500q5 5 10.500 0"/></g>
<circle cx="1729" cy="1016" r="1.200" fill="#8f8f8f"/><circle cx="1736.500" cy="1016" r="1.200" fill="#8f8f8f"/>
<circle cx="1819.500" cy="1021" r="30.500" fill="#1a7bec"/>
<path d="M1807.300 1008.300L1835 1021.700H1812.300Z" fill="#cfe4ff"/>
<path d="M1812.300 1021.700H1835L1808.300 1035Z" fill="#fff"/>
</svg>
</body></html>
